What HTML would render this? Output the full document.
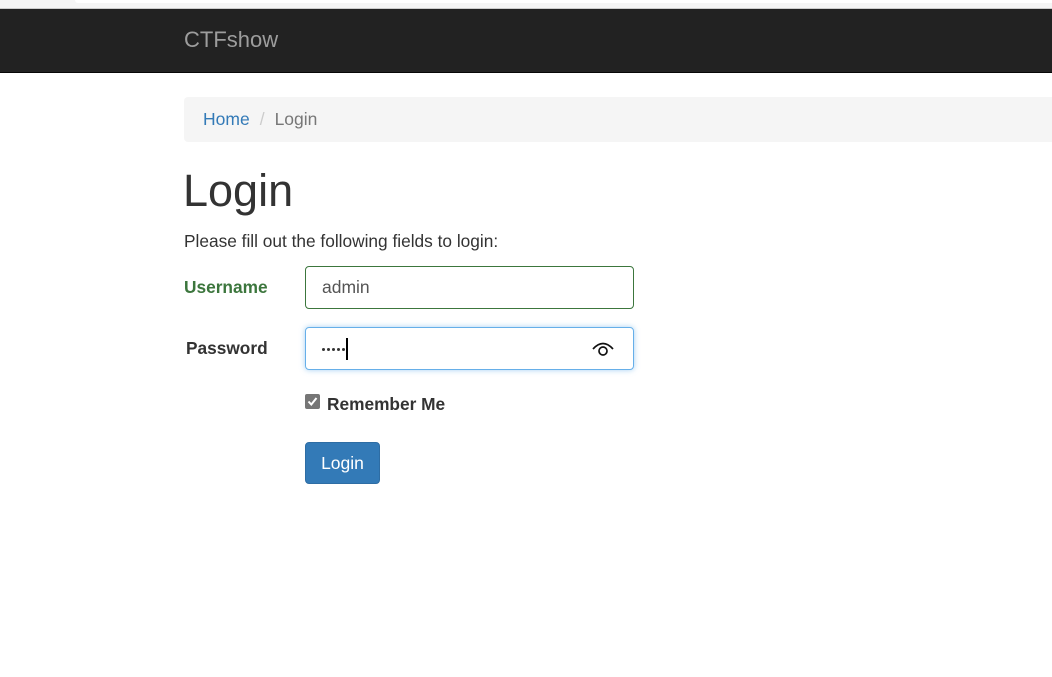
<!DOCTYPE html>
<html><head><meta charset="utf-8"><style>
*{box-sizing:border-box;margin:0;padding:0}
body{width:1052px;height:677px;overflow:hidden;background:#fff;font-family:"Liberation Sans",Arial,sans-serif;color:#333;position:relative}
.top{position:absolute;left:0;top:0;width:1052px;height:9px;background:#f5f5f5;border-bottom:1px solid #ccc}
.top .tab{position:absolute;left:75px;top:0;right:0;height:3px;background:#fff;border-radius:0 0 0 6px}
.nav{position:absolute;left:0;top:9px;width:1052px;height:64px;background:#222;border-bottom:1px solid #080808}
.brand{position:absolute;left:184px;top:18px;font-size:22px;color:#9d9d9d}
.bc{position:absolute;left:184px;top:97px;width:880px;height:45px;background:#f5f5f5;border-radius:4px;font-size:17.5px;line-height:44px;padding-left:19px}
.bc a{color:#337ab7}
.bc .s{color:#ccc;padding:0 10px}
.bc .c{color:#777}
h1{position:absolute;left:183px;top:165px;font-size:45px;font-weight:400;color:#333}
.p{position:absolute;left:184px;top:231px;font-size:17.3px}
.lbl{position:absolute;font-weight:bold;font-size:17.3px}
.in{position:absolute;left:305px;width:329px;height:43px;border-radius:4px;font-size:17.5px;padding-left:16px;line-height:41px}
.u{top:266px;border:1px solid #3c763d;color:#555}
.pw{top:327px;border:1px solid #66afe9;box-shadow:0 0 6px rgba(102,175,233,.6)}
.cb{position:absolute;left:305px;top:394px;width:15px;height:15px;background:#767676;border-radius:2px}
.btn{position:absolute;left:305px;top:442px;width:75px;height:42px;background:#337ab7;border:1px solid #2e6da4;border-radius:4px;color:#fff;font-size:17.5px;text-align:center;line-height:40px}
.d{display:inline-block;width:3px;height:3px;background:#333;border-radius:50%;margin-right:2px;vertical-align:middle}
</style></head><body>
<div class="top"><div class="tab"></div></div>
<div class="nav"><div class="brand">CTFshow</div></div>
<div class="bc"><a>Home</a><span class="s">/</span><span class="c">Login</span></div>
<h1>Login</h1>
<div class="p">Please fill out the following fields to login:</div>
<div class="lbl" style="left:184px;top:277px;color:#3c763d">Username</div>
<div class="in u">admin</div>
<div class="lbl" style="left:186px;top:338px;color:#333">Password</div>
<div class="in pw"><span class="d"></span><span class="d"></span><span class="d"></span><span class="d"></span><span class="d"></span><span style="display:inline-block;width:2px;height:22px;background:#000;vertical-align:middle;margin-left:-1px"></span>
<svg style="position:absolute;left:285px;top:11px" width="24" height="20" viewBox="0 0 24 20"><path d="M2 10 Q12 -1 22 10" fill="none" stroke="#111" stroke-width="1.7"/><circle cx="12" cy="12" r="4" fill="none" stroke="#111" stroke-width="1.7"/></svg></div>
<div class="cb"><svg width="15" height="15" viewBox="0 0 15 15"><path d="M3.5 7.5 L6.3 10.5 L11.5 4" fill="none" stroke="#fff" stroke-width="2"/></svg></div>
<div class="lbl" style="left:327px;top:394px;color:#333">Remember Me</div>
<div class="btn">Login</div>
</body></html>
